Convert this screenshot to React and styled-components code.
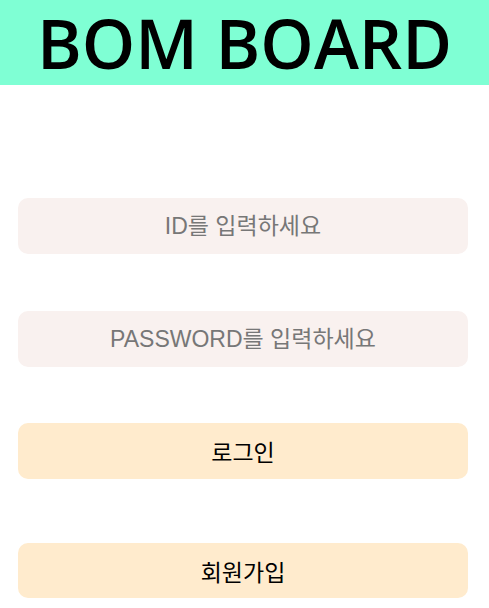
import React from 'react';
import styled, { createGlobalStyle } from 'styled-components';

const GlobalStyle = createGlobalStyle`
  html, body {
    margin: 0;
    padding: 0;
    background: #ffffff;
  }
`;

const Page = styled.div`
  display: flex;
  flex-direction: column;
  width: 100%;
`;

const Header = styled.header`
  width: 100%;
  height: 85px;
  background: #7fffd4;
  display: flex;
  align-items: center;
  justify-content: center;
`;

const Title = styled.h1`
  margin: 0;
  font-family: "Open Sans", "Noto Sans CJK KR", sans-serif;
  font-weight: 600;
  font-size: 68px;
  line-height: 80px;
  color: #000;
`;

const Form = styled.form`
  width: 450px;
  margin-left: 18px;
  display: flex;
  flex-direction: column;
  padding-top: 113px;
`;

const Input = styled.input`
  box-sizing: border-box;
  width: 100%;
  height: 56px;
  border: none;
  outline: none;
  border-radius: 10px;
  background: #f9f1ef;
  text-align: center;
  font-family: "Liberation Sans", "Noto Sans CJK KR", sans-serif;
  font-size: 23px;
  color: #333;
  margin-bottom: ${p => p.$gap}px;

  &::placeholder {
    color: #777;
  }
`;

const Button = styled.button`
  box-sizing: border-box;
  width: 100%;
  height: ${p => p.$h}px;
  border: none;
  border-radius: 10px;
  background: #ffebcd;
  font-family: "Liberation Sans", "Noto Sans CJK KR", sans-serif;
  font-size: 23px;
  color: #000;
  margin-bottom: ${p => p.$gap}px;
  cursor: pointer;
`;

export default function App() {
  return (
    <Page>
      <GlobalStyle />
      <Header>
        <Title>BOM BOARD</Title>
      </Header>
      <Form onSubmit={e => e.preventDefault()}>
        <Input $gap={57} placeholder="ID를 입력하세요" />
        <Input $gap={56} type="password" placeholder="PASSWORD를 입력하세요" />
        <Button $h={56} $gap={64} type="submit">로그인</Button>
        <Button $h={55} $gap={0} type="button">회원가입</Button>
      </Form>
    </Page>
  );
}
